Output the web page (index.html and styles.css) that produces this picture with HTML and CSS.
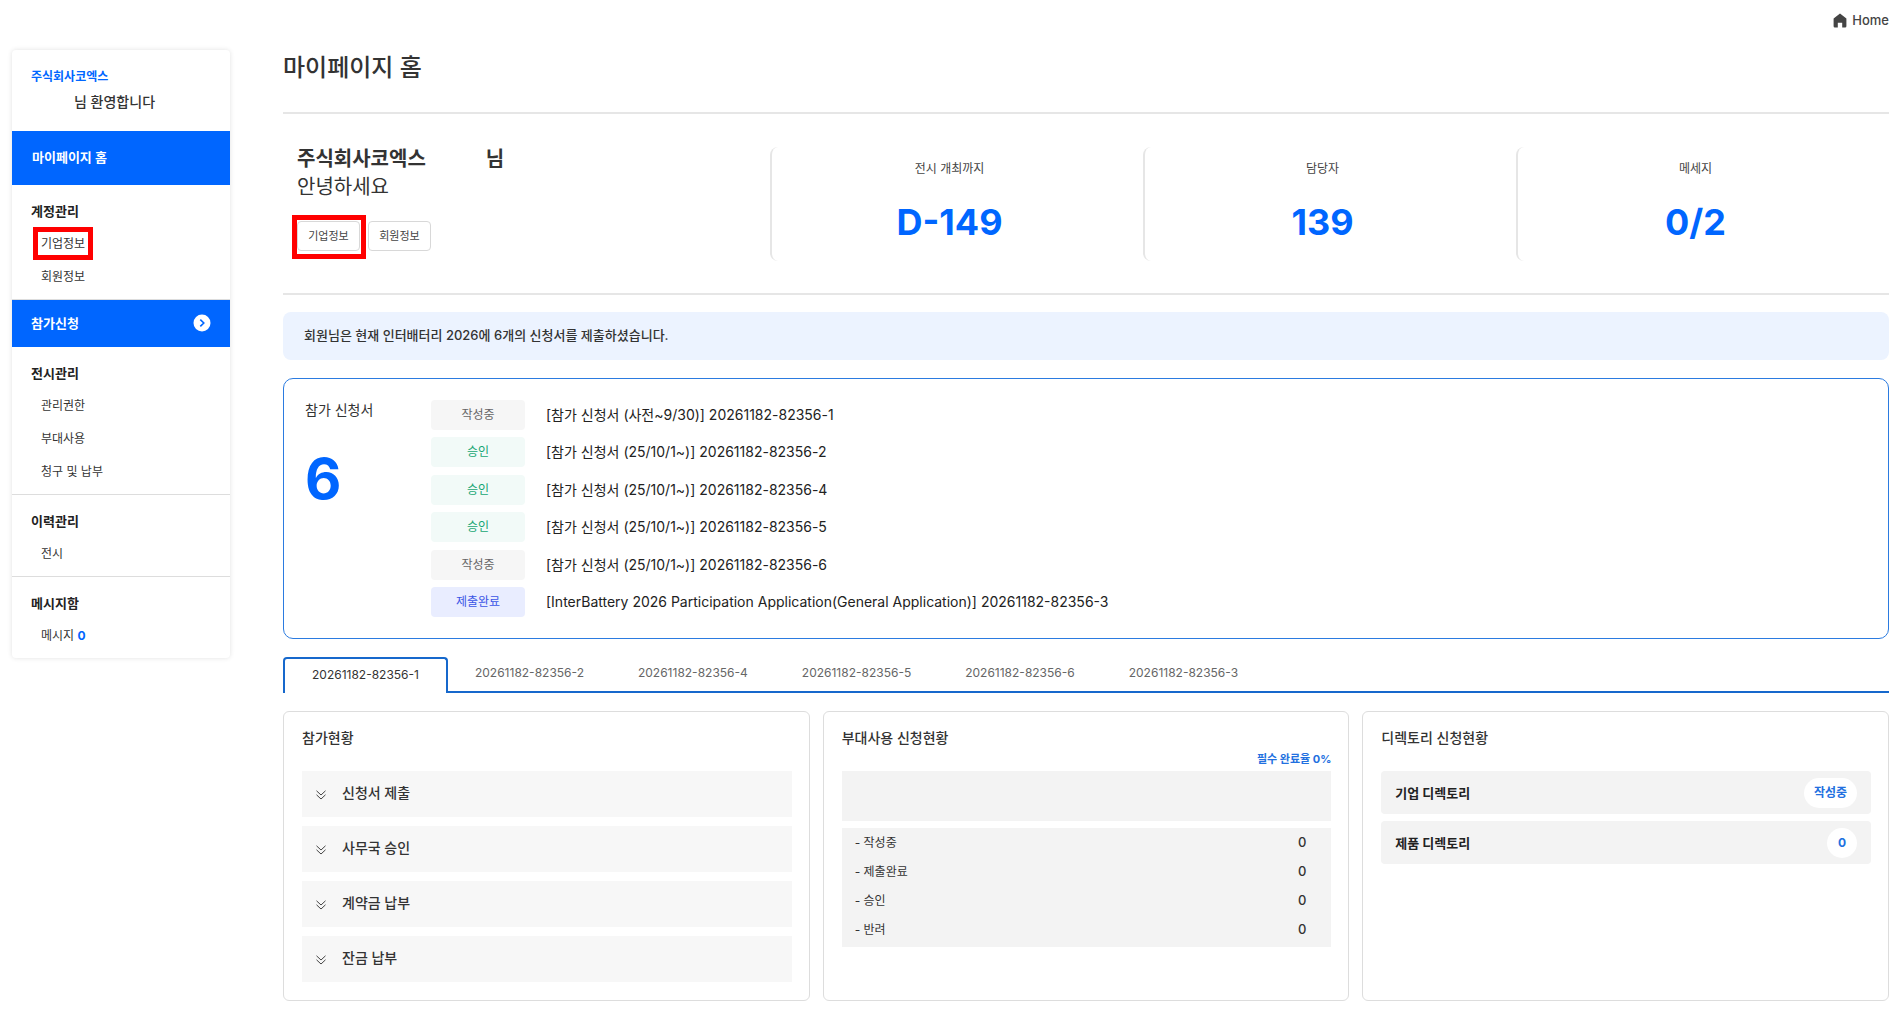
FILE: index.html
```html
<!DOCTYPE html>
<html lang="ko">
<head>
<meta charset="utf-8">
<meta name="viewport" content="width=device-width, initial-scale=1">
<title>마이페이지 홈</title>
<link rel="stylesheet" href="styles.css">
</head>
<body>
<header class="topbar">
  <a class="home-link" href="#">
    <svg class="home-icon" viewBox="0 0 14 15" aria-hidden="true"><path d="M7 0.5 13.4 5.4V13.2Q13.4 14.5 12.1 14.5H9.2V9.8H4.8V14.5H1.9Q0.6 14.5 0.6 13.2V5.4Z"/></svg>
    Home
  </a>
</header>
<div class="layout">
  <aside class="sidebar">
    <div class="welcome">
      <p class="welcome-company">주식회사코엑스</p>
      <p class="welcome-user"><span class="side-name"></span>님 환영합니다</p>
    </div>
    <nav>
      <a class="nav-main nav-home" href="#">마이페이지 홈</a>
      <section class="nav-group">
        <h2>계정관리</h2>
        <ul>
          <li><a class="marked" href="#">기업정보</a></li>
          <li><a href="#">회원정보</a></li>
        </ul>
      </section>
      <a class="nav-main nav-apply" href="#">참가신청
        <svg class="go-icon" viewBox="0 0 18 18" aria-hidden="true"><circle cx="9" cy="9" r="8.5" fill="#fff"/><path d="M7.3 5.6 10.8 9 7.3 12.4" fill="none" stroke="#0066ff" stroke-width="1.6"/></svg>
      </a>
      <section class="nav-group">
        <h2>전시관리</h2>
        <ul>
          <li><a href="#">관리권한</a></li>
          <li><a href="#">부대사용</a></li>
          <li><a href="#">청구 및 납부</a></li>
        </ul>
      </section>
      <section class="nav-group">
        <h2>이력관리</h2>
        <ul>
          <li><a href="#">전시</a></li>
        </ul>
      </section>
      <section class="nav-group">
        <h2>메시지함</h2>
        <ul>
          <li><a href="#">메시지 <strong class="count">0</strong></a></li>
        </ul>
      </section>
    </nav>
  </aside>

  <main class="content">
    <h1>마이페이지 홈</h1>

    <section class="summary">
      <div class="greeting">
        <p class="greeting-name">주식회사코엑스<span class="user-name"></span>님</p>
        <p class="greeting-hello">안녕하세요</p>
        <div class="greeting-actions">
          <button class="small-btn marked" type="button">기업정보</button>
          <button class="small-btn" type="button">회원정보</button>
        </div>
      </div>
      <div class="stat"><p>전시 개최까지</p><strong>D-149</strong></div>
      <div class="stat"><p>담당자</p><strong>139</strong></div>
      <div class="stat"><p>메세지</p><strong>0/2</strong></div>
    </section>

    <p class="notice">회원님은 현재 인터배터리 2026에 6개의 신청서를 제출하셨습니다.</p>

    <section class="applications">
      <div class="app-total">
        <h2>참가 신청서</h2>
        <strong>6</strong>
      </div>
      <ul class="app-list">
        <li><span class="tag draft">작성중</span><a href="#">[참가 신청서 (사전~9/30)] 20261182-82356-1</a></li>
        <li><span class="tag approved">승인</span><a href="#">[참가 신청서 (25/10/1~)] 20261182-82356-2</a></li>
        <li><span class="tag approved">승인</span><a href="#">[참가 신청서 (25/10/1~)] 20261182-82356-4</a></li>
        <li><span class="tag approved">승인</span><a href="#">[참가 신청서 (25/10/1~)] 20261182-82356-5</a></li>
        <li><span class="tag draft">작성중</span><a href="#">[참가 신청서 (25/10/1~)] 20261182-82356-6</a></li>
        <li><span class="tag submitted">제출완료</span><a href="#">[InterBattery 2026 Participation Application(General Application)] 20261182-82356-3</a></li>
      </ul>
    </section>

    <div class="tabs" role="tablist">
      <button class="tab active" type="button" role="tab" aria-selected="true">20261182-82356-1</button>
      <button class="tab" type="button" role="tab">20261182-82356-2</button>
      <button class="tab" type="button" role="tab">20261182-82356-4</button>
      <button class="tab" type="button" role="tab">20261182-82356-5</button>
      <button class="tab" type="button" role="tab">20261182-82356-6</button>
      <button class="tab" type="button" role="tab">20261182-82356-3</button>
    </div>

    <div class="cards">
      <section class="card">
        <h2>참가현황</h2>
        <ul class="steps">
          <li><svg class="chevrons" viewBox="0 0 10 10" aria-hidden="true"><path d="M0.5 0.8 5 5 9.5 0.8M0.5 4.8 5 9 9.5 4.8"/></svg>신청서 제출</li>
          <li><svg class="chevrons" viewBox="0 0 10 10" aria-hidden="true"><path d="M0.5 0.8 5 5 9.5 0.8M0.5 4.8 5 9 9.5 4.8"/></svg>사무국 승인</li>
          <li><svg class="chevrons" viewBox="0 0 10 10" aria-hidden="true"><path d="M0.5 0.8 5 5 9.5 0.8M0.5 4.8 5 9 9.5 4.8"/></svg>계약금 납부</li>
          <li><svg class="chevrons" viewBox="0 0 10 10" aria-hidden="true"><path d="M0.5 0.8 5 5 9.5 0.8M0.5 4.8 5 9 9.5 4.8"/></svg>잔금 납부</li>
        </ul>
      </section>
      <section class="card">
        <h2>부대사용 신청현황</h2>
        <p class="rate">필수 완료율 0%</p>
        <div class="blank-panel"></div>
        <dl class="counts">
          <div><dt>- 작성중</dt><dd>0</dd></div>
          <div><dt>- 제출완료</dt><dd>0</dd></div>
          <div><dt>- 승인</dt><dd>0</dd></div>
          <div><dt>- 반려</dt><dd>0</dd></div>
        </dl>
      </section>
      <section class="card">
        <h2>디렉토리 신청현황</h2>
        <ul class="directories">
          <li>기업 디렉토리<a class="pill" href="#">작성중</a></li>
          <li>제품 디렉토리<a class="pill" href="#">0</a></li>
        </ul>
      </section>
    </div>
  </main>
</div>
</body>
</html>
```
FILE: styles.css
```css
* { box-sizing: border-box; margin: 0; padding: 0; }

body {
  background: #fff;
  color: #333;
  font-family: Inter, "Noto Sans CJK KR", sans-serif;
  font-size: 14px;
  line-height: 20px;
}

ul { list-style: none; }
a { color: inherit; text-decoration: none; }
button { font: inherit; cursor: pointer; }

.topbar {
  display: flex;
  justify-content: flex-end;
  padding: 10px 15px 0 12px;
}
.home-link {
  display: flex;
  align-items: center;
  gap: 5px;
  color: #444;
  font-size: 13px;
  font-weight: 500;
}
.home-icon { width: 14px; height: 15px; fill: #444; }

.layout {
  display: flex;
  align-items: flex-start;
  gap: 53px;
  padding: 20px 15px 20px 12px;
}

/* sidebar */
.sidebar {
  flex: 0 0 218px;
  border-radius: 4px;
  box-shadow: 0 0 5px rgba(0, 0, 0, 0.12);
}
.welcome { padding: 17px 19px 19px; }
.welcome-company {
  color: #0066ff;
  font-size: 12px;
  font-weight: 700;
}
.welcome-user {
  display: flex;
  padding-top: 5px;
  font-weight: 500;
}
.side-name { width: 43px; }
.nav-main {
  display: flex;
  align-items: center;
  justify-content: space-between;
  padding: 0 19px 2px;
  background: #0066ff;
  color: #fff;
  font-size: 13px;
  font-weight: 700;
}
.nav-home { height: 54px; padding-left: 20px; }
.nav-apply { height: 47px; }
.go-icon { width: 18px; height: 18px; }
.nav-group {
  padding: 16px 19px 6px;
  border-bottom: 1px solid #ddd;
}
.nav-group:last-child { border-bottom: 0; }
.nav-group h2 {
  margin-bottom: 6px;
  color: #222;
  font-size: 13px;
  font-weight: 700;
}
.nav-group li {
  padding-left: 10px;
  font-size: 12px;
  line-height: 33px;
}
.nav-group a { display: inline-block; }
.count { color: #0066ff; }

/* red frame that lies over a highlighted control */
.marked { position: relative; }
.marked::after {
  content: "";
  position: absolute;
  inset: 0 -8px;
  border: 5px solid #f00;
}
.small-btn.marked::after { inset: -7px -7px -9px -6px; }

/* content */
.content { flex: 1; min-width: 0; }
h1 {
  padding-bottom: 26px;
  border-bottom: 2px solid #e6e6e6;
  font-size: 24px;
  font-weight: 500;
  line-height: 36px;
}

.summary {
  display: grid;
  grid-template-columns: 487fr 373fr 373fr 373fr;
  padding: 33px 0 32px;
  border-bottom: 2px solid #e6e6e6;
}
.greeting { margin-top: -2px; padding-left: 14px; font-size: 20px; line-height: 28px; }
.greeting-name { display: flex; font-weight: 700; }
.user-name { width: 60px; }
.greeting-actions { display: flex; gap: 8px; padding-top: 20px; }
.small-btn {
  width: 63px;
  height: 30px;
  border: 1px solid #d8d8d8;
  border-radius: 4px;
  background: #fff;
  color: #444;
  font-size: 11px;
}
.stat {
  min-height: 114px;
  padding: 12px 16px 0 0;
  border-left: 2px solid #e6e6e6;
  border-radius: 8px;
  text-align: center;
}
.stat p { color: #444; font-size: 12px; }
.stat strong {
  display: block;
  padding-top: 21px;
  color: #0066ff;
  font-size: 36px;
  line-height: 44px;
}

.notice {
  margin-top: 17px;
  padding: 13px 21px 15px;
  border-radius: 8px;
  background: #ecf3ff;
  font-size: 13px;
  font-weight: 500;
}

.applications {
  display: flex;
  margin-top: 18px;
  padding: 21px 21px 21px;
  border: 1px solid #2b7be0;
  border-radius: 10px;
}
.app-total { flex: 0 0 126px; }
.app-total h2 { font-size: 14px; font-weight: 400; }
.app-total strong {
  display: block;
  padding-top: 23px;
  color: #0066ff;
  font-size: 56px;
  line-height: 72px;
}
.app-list {
  display: flex;
  flex-direction: column;
  justify-content: space-between;
  min-height: 217px;
}
.app-list li {
  display: flex;
  align-items: center;
  gap: 21px;
  color: #222;
}
.tag {
  width: 94px;
  border-radius: 4px;
  font-size: 12px;
  line-height: 30px;
  text-align: center;
}
.draft { background: #f6f6f6; color: #666; }
.approved { background: #f2faf8; color: #17a673; }
.submitted { background: #e9edff; color: #3b55e6; }

.tabs {
  display: flex;
  margin-top: 18px;
  background: linear-gradient(#1668cc, #1668cc) bottom / 100% 2px no-repeat;
}
.tab {
  height: 36px;
  padding: 0 27px 4px;
  border: 0;
  background: none;
  color: #666;
  font-size: 12px;
}
.tab.active {
  padding-bottom: 2px;
  border: 2px solid #1668cc;
  border-bottom: 0;
  border-radius: 4px 4px 0 0;
  background: #fff;
  color: #333;
}

.cards {
  display: grid;
  grid-template-columns: repeat(3, 1fr);
  gap: 13px;
  margin-top: 18px;
}
.card {
  padding: 16px 17px 18px 18px;
  border: 1px solid #ddd;
  border-radius: 6px;
}
.card h2 { font-size: 14px; font-weight: 500; }
.steps, .directories { margin-top: 23px; }
.steps { display: grid; gap: 9px; }
.steps li {
  display: flex;
  align-items: center;
  gap: 16px;
  height: 46px;
  padding: 0 14px 2px;
  background: #f7f7f7;
  font-weight: 500;
}
.chevrons {
  width: 10px;
  height: 10px;
  margin-top: 3px;
  fill: none;
  stroke: #444;
}
.rate {
  padding-bottom: 2px;
  margin-top: 1px;
  color: #2270e0;
  font-size: 11px;
  font-weight: 700;
  text-align: right;
}
.blank-panel { height: 50px; background: #f3f3f3; }
.counts {
  margin-top: 7px;
  padding-bottom: 3px;
  background: #f3f3f3;
}
.counts div {
  display: flex;
  justify-content: space-between;
  padding: 0 25px 0 13px;
  font-size: 12px;
  line-height: 29px;
}
.counts dd { font-size: 13px; font-weight: 500; }
.directories { display: grid; gap: 7px; }
.directories li {
  display: flex;
  align-items: center;
  justify-content: space-between;
  height: 43px;
  padding: 0 14px;
  border-radius: 4px;
  background: #f3f3f3;
  color: #222;
  font-size: 13px;
  font-weight: 700;
}
.pill {
  min-width: 30px;
  padding: 0 10px;
  border-radius: 15px;
  background: #fff;
  color: #2270e0;
  font-size: 12px;
  line-height: 30px;
  text-align: center;
}
```
